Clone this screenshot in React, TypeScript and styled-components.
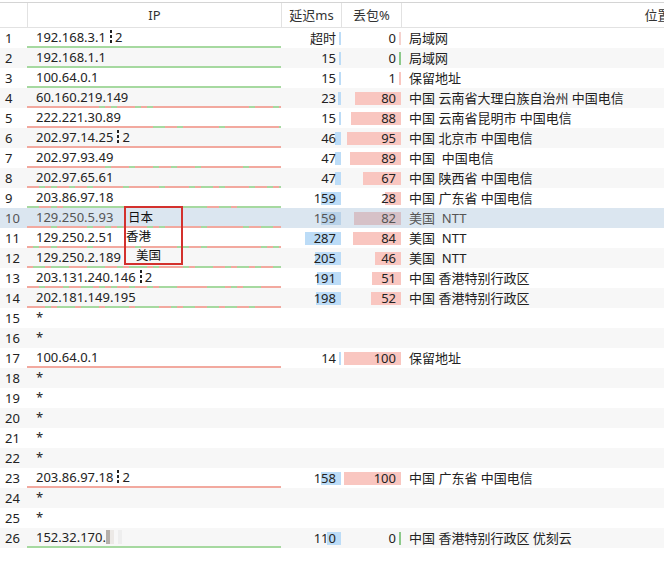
import React from "react";
import styled, { createGlobalStyle } from "styled-components";

const GlobalStyle = createGlobalStyle`
  body {
    margin: 0;
    background: #fff;
    font-family: "Noto Sans", "Noto Sans CJK SC", sans-serif;
    font-size: 12.5px;
    color: #222;
  }
`;

const COLS = "27px 254px 60px 60px 512px";

const GREEN = "#a6d9a0";
const RED = "#f2a99f";

type Hop = {
    ip?: string;
    multi?: boolean;
    lat?: string;
    latBar?: number;
    loss?: number;
    zeroGreen?: boolean;
    loc?: string;
    redacted?: boolean;
};

const hops: Hop[] = [
    {ip: "192.168.3.1", multi: true, lat: "超时", latBar: 2, loss: 0, loc: "局域网"},
    {ip: "192.168.1.1", lat: "15", loss: 0, zeroGreen: true, loc: "局域网"},
    {ip: "100.64.0.1", lat: "15", loss: 1, loc: "保留地址"},
    {ip: "60.160.219.149", lat: "23", loss: 80, loc: "中国 云南省大理白族自治州 中国电信"},
    {ip: "222.221.30.89", lat: "15", loss: 88, loc: "中国 云南省昆明市 中国电信"},
    {ip: "202.97.14.25", multi: true, lat: "46", loss: 95, loc: "中国 北京市 中国电信"},
    {ip: "202.97.93.49", lat: "47", loss: 89, loc: "中国  中国电信"},
    {ip: "202.97.65.61", lat: "47", loss: 67, loc: "中国 陕西省 中国电信"},
    {ip: "203.86.97.18", lat: "159", loss: 28, loc: "中国 广东省 中国电信"},
    {ip: "129.250.5.93", lat: "159", loss: 82, loc: "美国  NTT"},
    {ip: "129.250.2.51", lat: "287", loss: 84, loc: "美国  NTT"},
    {ip: "129.250.2.189", lat: "205", loss: 46, loc: "美国  NTT"},
    {ip: "203.131.240.146", multi: true, lat: "191", loss: 51, loc: "中国 香港特别行政区"},
    {ip: "202.181.149.195", lat: "198", loss: 52, loc: "中国 香港特别行政区"},
    {},
    {},
    {ip: "100.64.0.1", lat: "14", loss: 100, loc: "保留地址"},
    {},
    {},
    {},
    {},
    {},
    {ip: "203.86.97.18", multi: true, lat: "158", loss: 100, loc: "中国 广东省 中国电信"},
    {},
    {},
    {ip: "152.32.170.", redacted: true, lat: "110", loss: 0, zeroGreen: true, loc: "中国 香港特别行政区 优刻云"},
];

const SELECTED = 9;

// stripe the IP underline green/red by packet loss
function lossStripes(loss: number, seed: number) {
    if (loss <= 0) return GREEN;
    if (loss >= 100) return RED;
    let s = seed * 9301 + 49297;
    const stops: string[] = [];
    const seg = 6;
    for (let x = 0; x < 254; x += seg) {
        s = (s * 9301 + 49297) % 233280;
        const c = s / 233280 < loss / 100 ? RED : GREEN;
        stops.push(`${c} ${x}px ${x + seg}px`);
    }
    return `linear-gradient(to right, ${stops.join(", ")})`;
}

const Page = styled.div`
  width: 664px;
  overflow: hidden;
  padding-top: 2px;
  position: relative;
`;

const Header = styled.div`
  display: grid;
  grid-template-columns: ${COLS};
  height: 24px;
  border-top: 1px solid #d4d4d4;
  border-bottom: 1px solid #e2e2e2;
`;

const HeadCell = styled.div`
  border-left: 1px solid #e2e2e2;
  text-align: center;
  line-height: 24px;
  font-size: 13px;
  color: #333;
  white-space: nowrap;

  &:first-child {
    border-left: none;
  }
`;

const Row = styled.div<{ $bg: string; $dim?: boolean }>`
  display: grid;
  grid-template-columns: ${COLS};
  height: 20px;
  background: ${p => p.$bg};
  color: ${p => (p.$dim ? "#555" : "#222")};
`;

const NumCell = styled.div`
  padding-left: 5px;
  line-height: 20px;
  font-size: 13px;
`;

const IpCell = styled.div`
  display: flex;
  flex-direction: column;
`;

const IpText = styled.div`
  height: 18px;
  line-height: 19px;
  padding-left: 9px;
  display: flex;
  align-items: center;
  white-space: nowrap;
  font-size: 13px;
`;

const Underline = styled.div`
  height: 2px;
`;

const Multi = styled.span`
  display: inline-block;
  width: 2px;
  height: 15px;
  margin: 0 3px 0 4px;
  background: repeating-linear-gradient(to bottom, #222 0 3px, transparent 3px 5px);
`;

const Redact = styled.span`
  display: inline-block;
  width: 20px;
  height: 14px;
  background: linear-gradient(to right, #b5afaa 0 4px, #ece9e6 4px 8px, transparent 8px 12px, #eeeeee 12px 16px, transparent 16px);
`;

const BarCell = styled.div<{ $w: number; $color: string }>`
  display: flex;
  justify-content: flex-end;
  align-items: center;
  padding-right: 5px;
  line-height: 20px;
  font-size: 13px;
  background: linear-gradient(${p => p.$color}, ${p => p.$color}) right 0 top 4px / ${p => p.$w}px 13px no-repeat;
`;

const LocCell = styled.div`
  padding-left: 8px;
  line-height: 20px;
  white-space: pre;
  font-size: 13px;
`;

const Callout = styled.div`
  position: absolute;
  left: 124px;
  top: 206px;
  width: 55px;
  height: 55px;
  border: 2px solid #d3312d;
  display: flex;
  flex-direction: column;
`;

const CalloutLabel = styled.div<{ $indent: number }>`
  height: 19px;
  line-height: 19px;
  padding-left: ${p => p.$indent}px;
  font-size: 12.5px;
  color: #111;
`;

export default function App() {
    return (
        <Page>
            <GlobalStyle/>
            <Header>
                <HeadCell/>
                <HeadCell>IP</HeadCell>
                <HeadCell>延迟ms</HeadCell>
                <HeadCell>丢包%</HeadCell>
                <HeadCell>位置</HeadCell>
            </Header>
            {hops.map((h, i) => {
                const sel = i === SELECTED;
                const bg = sel ? "#dbe6f0" : i % 2 === 1 ? "#f7f7f7" : "#fff";
                const latNum = h.lat ? parseInt(h.lat, 10) : NaN;
                const latW = h.latBar ?? (isNaN(latNum) ? 2 : Math.max(2, Math.round(latNum / 8)));
                const loss = h.loss ?? 0;
                const lossW = h.ip ? Math.max(2, Math.round(loss * 0.57)) : 0;
                const lossColor = h.zeroGreen ? "#8cc98a" : sel ? "#d6c1c7" : loss === 0 ? "#f5d2ce" : "#f9c6c0";
                return (
                    <Row key={i} $bg={bg} $dim={sel}>
                        <NumCell>{i + 1}</NumCell>
                        <IpCell>
                            <IpText>
                                {h.ip ?? "*"}
                                {h.redacted && <Redact/>}
                                {h.multi && <><Multi/>2</>}
                            </IpText>
                            {h.ip && <Underline style={{background: lossStripes(loss, i + 3)}}/>}
                        </IpCell>
                        <BarCell $w={h.ip ? latW : 0} $color={sel ? "#b9d2e8" : "#bcdcf7"}>{h.lat}</BarCell>
                        <BarCell $w={lossW} $color={lossColor}>{h.ip ? loss : ""}</BarCell>
                        <LocCell>{h.loc}</LocCell>
                    </Row>
                );
            })}
            <Callout>
                <CalloutLabel $indent={2}>日本</CalloutLabel>
                <CalloutLabel $indent={0}>香港</CalloutLabel>
                <CalloutLabel $indent={10}>美国</CalloutLabel>
            </Callout>
        </Page>
    );
}
